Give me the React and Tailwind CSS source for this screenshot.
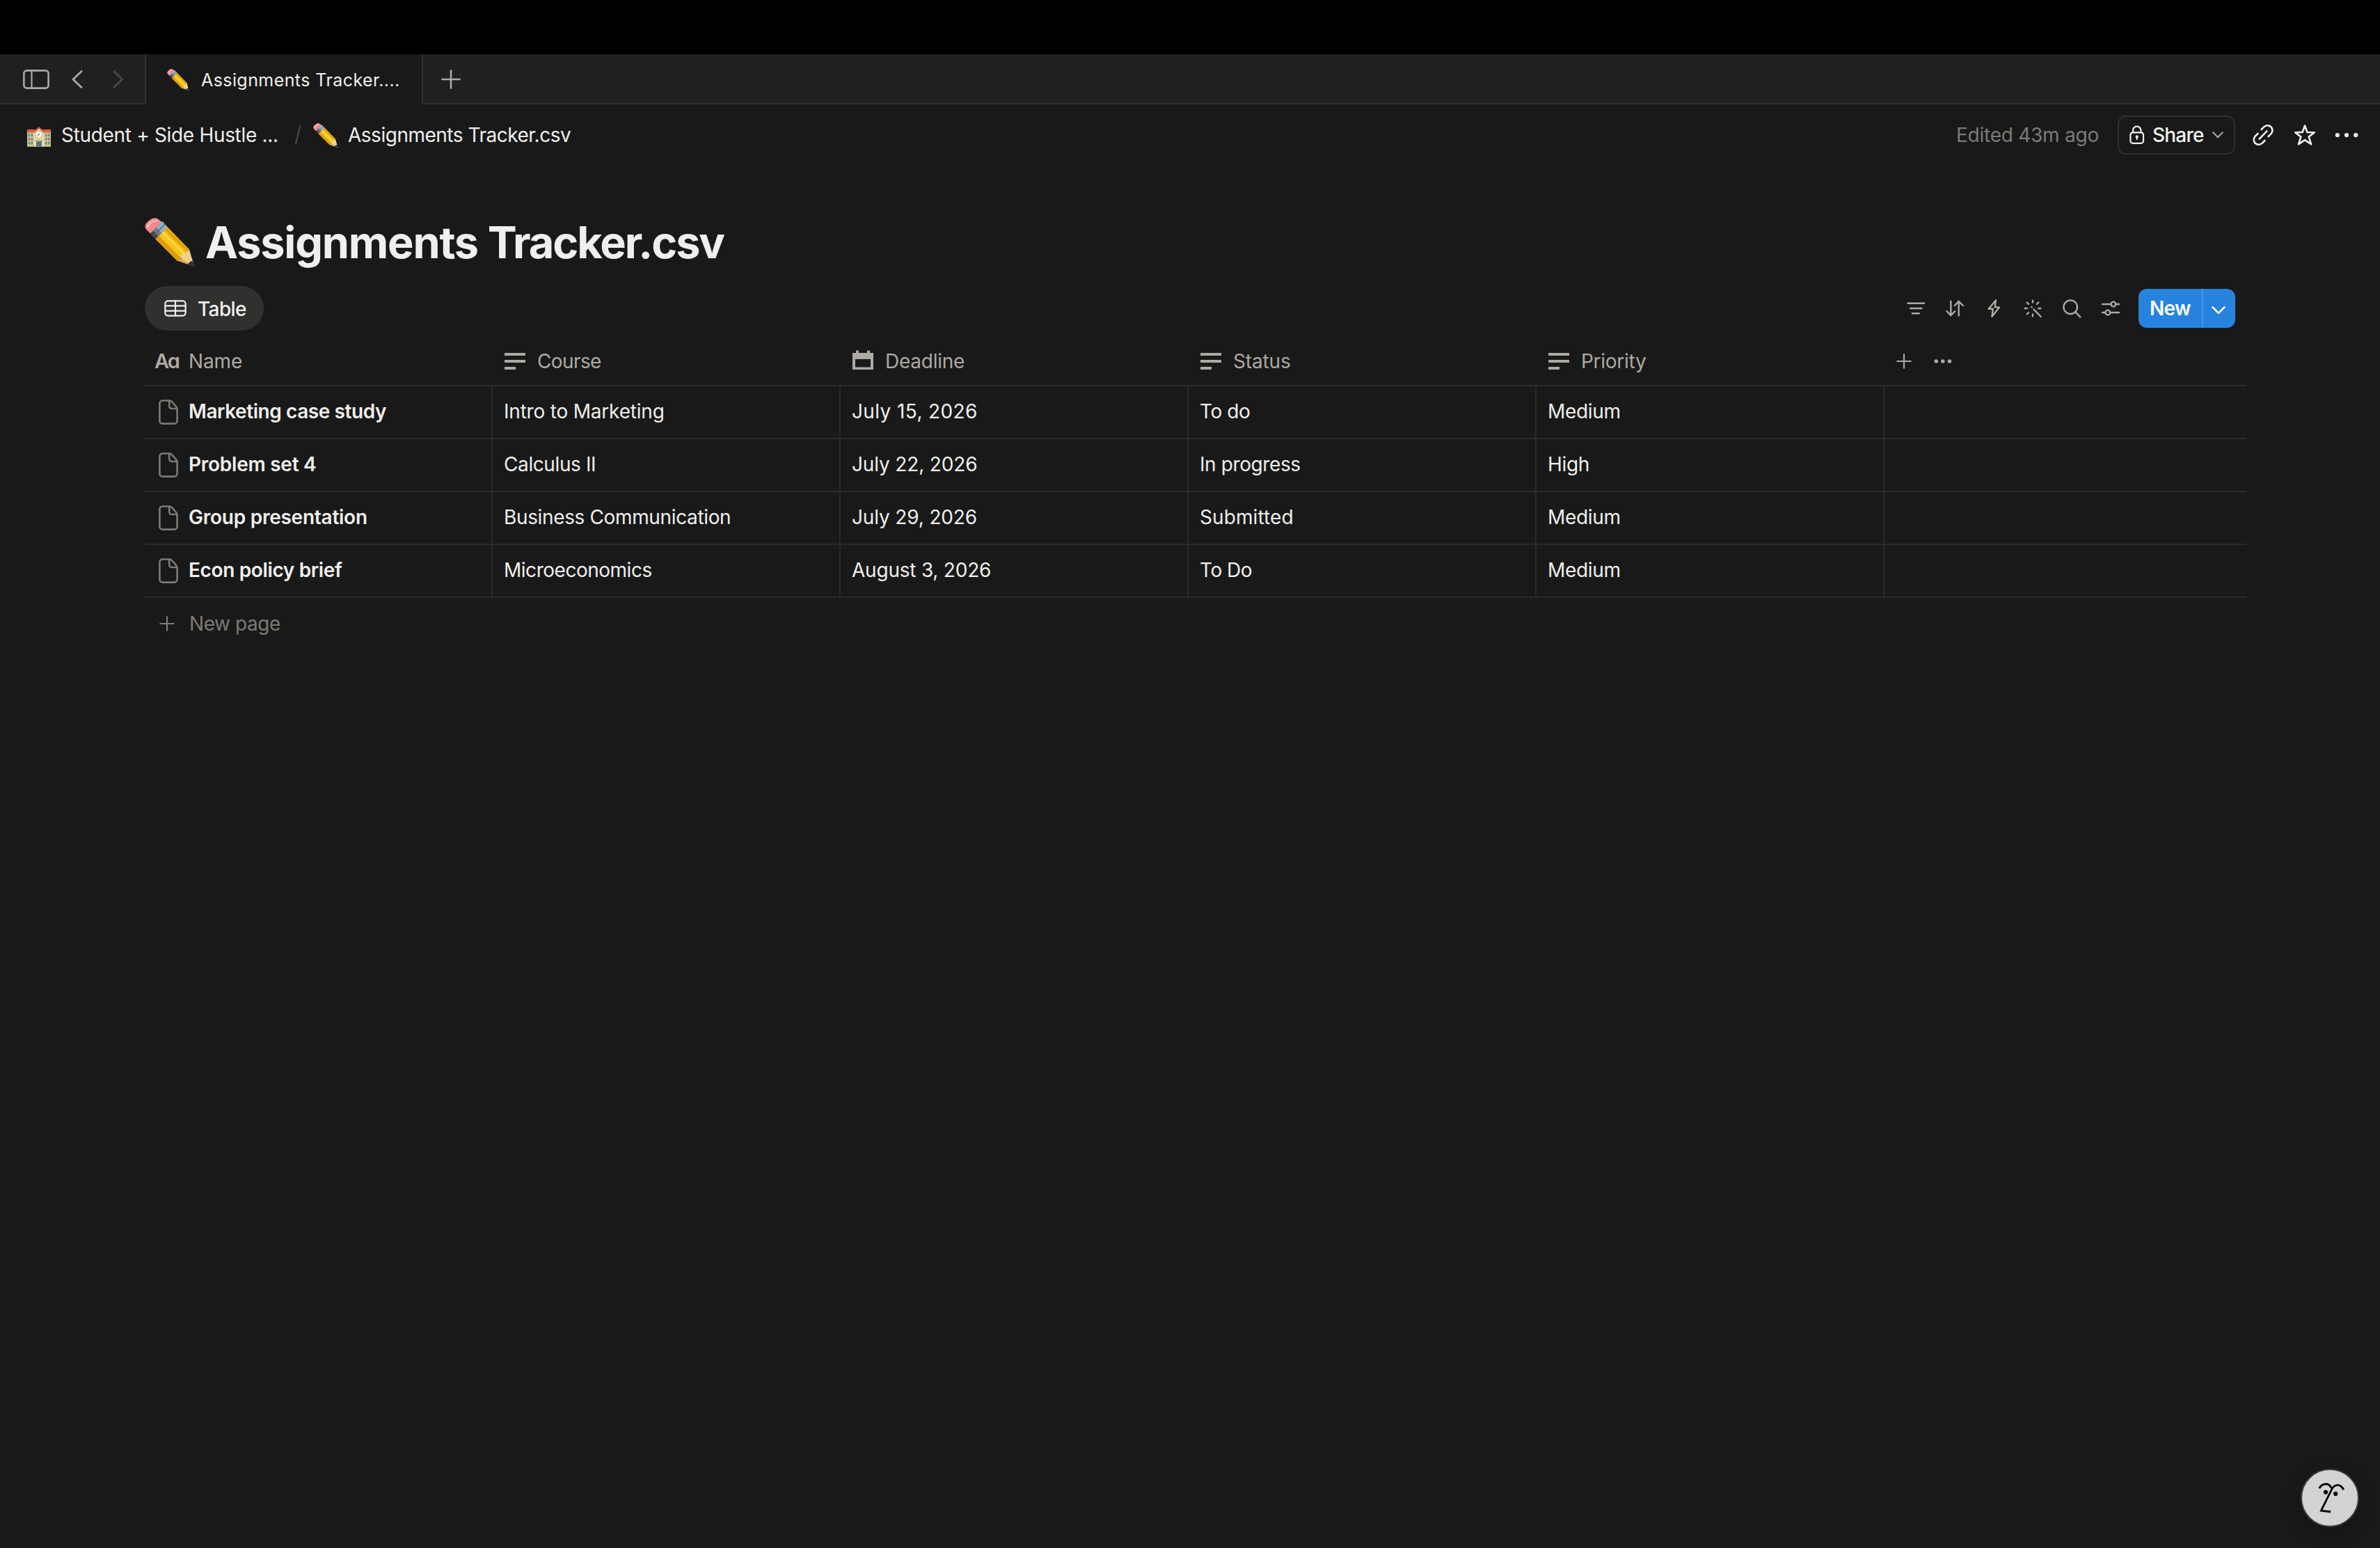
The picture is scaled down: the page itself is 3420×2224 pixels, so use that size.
import React from 'react';

const Icon = ({ w, h, className, width = 2.4, children }) => (
    <svg
        width={w}
        height={h}
        viewBox={`0 0 ${w} ${h}`}
        fill="none"
        stroke="currentColor"
        strokeWidth={width}
        strokeLinecap="round"
        strokeLinejoin="round"
        className={`shrink-0 ${className || ''}`}
    >
        {children}
    </svg>
);

const Pencil = ({ className }) => (
    <svg viewBox="0 0 72 70" className={`shrink-0 ${className}`}>
        <path d="M8.5 23 L2 16.5 C-1 12 1 8 5 5 C9 1 14 -1.5 19 1.5 L26 7 Z" fill="#f08a8d" />
        <path d="M4 13 C6 8 11 4 17 4" stroke="#f9b4b3" strokeWidth="3" fill="none" strokeLinecap="round" />
        <path d="M8 22.5 L25.5 5.3 L32.5 13 L15.5 30.5 Z" fill="#6f7d8c" />
        <path d="M17 13.8 L25.5 5.3 L32.5 13 L24 21.7 Z" fill="#8fb0d0" />
        <path d="M8 22.5 L12 18.5 L19.5 26.3 L15.5 30.5 Z" fill="#454649" />
        <path d="M11.5 26.5 L29 9" stroke="#59626c" strokeWidth="1.4" />
        <path d="M15.5 30.5 L32.5 13 L64 45.5 L47 62 Z" fill="#fcc41a" />
        <path d="M15.5 30.5 L20.3 25.5 L52 58 L47 62 Z" fill="#dd9c10" />
        <path d="M28 17.8 L32.5 13 L64 45.5 L60 49 Z" fill="#e2a60c" />
        <path d="M26 21 L57 52" stroke="#ffdc4e" strokeWidth="2.6" />
        <path d="M47 61.5 L52.5 58.5 L51.5 54 L60 49 L64 45.5 L71.2 69.8 Z" fill="#f3d08d" />
        <path d="M47 61.5 L52.5 58.5 L71.2 69.8 Z" fill="#d9ab62" />
        <path d="M66.8 62 C64.5 63 63 65 62 67.2 L71.4 70 L69.3 62.6 Z" fill="#2f3237" />
    </svg>
);

const School = () => (
    <svg width="36" height="29" viewBox="0 0 36 29" className="shrink-0">
        <path d="M1 7 H35 V29 H1 Z" fill="#cfc48f" />
        <path d="M1.5 4 H34.5 L36 8.6 H0 Z" fill="#dc6144" />
        <path d="M11 8 L18 2 L25 8 V29 H11 Z" fill="#ece3b4" />
        <path d="M9.5 7.8 L18 0 L26.5 7.8 L24.8 8.8 L18 3 L11.2 8.8 Z" fill="#d9573c" />
        <circle cx="18" cy="11.6" r="5.6" fill="#cfa954" />
        <circle cx="18" cy="11.6" r="4.5" fill="#fbfbf7" />
        <path d="M18.6 11 L15.6 12.8 M18.6 11 L18 9.6" stroke="#3a3a3a" strokeWidth="1" />
        {[2.8, 6.8, 27.2, 31.2].map((x) =>
            [10.4, 16, 21.8].map((y) => (
                <rect key={`${x}-${y}`} x={x} y={y} width="2.2" height="3.6" fill="#57809b" />
            ))
        )}
        <rect x="12.2" y="18.8" width="11.6" height="1.8" fill="#b7aa72" />
        <rect x="14" y="21" width="8" height="8" fill="#3c6b87" />
        <path d="M16.2 21 V29 M19.8 21 V29" stroke="#b7ac78" strokeWidth="0.7" />
        <rect x="1" y="28.2" width="34" height="0.8" fill="#9f955f" />
    </svg>
);

const TextIcon = () => (
    <svg width="30" height="24" viewBox="0 0 30 24" fill="currentColor" className="shrink-0">
        <rect width="30" height="4" />
        <rect y="10" width="30" height="4" />
        <rect y="20" width="16" height="4" />
    </svg>
);

const CalendarIcon = () => (
    <svg width="30" height="32" viewBox="0 0 30 32" fill="currentColor" className="shrink-0">
        <path fillRule="evenodd" d="M0 4 H5 V0.5 H9 V4 H21 V0.5 H25 V4 H30 V28 H0 Z M4 13 V24.5 H26 V13 Z" />
    </svg>
);

const PageIcon = () => (
    <Icon w={28} h={36} width={2.6} className="text-[#7d7a75]">
        <path d="M6 1.5 H15.5 C17 1.5 18 2 19 3.1 L25 10 C26 11.1 26.6 12.3 26.6 13.8 V30.5 A4.2 4.2 0 0 1 22.4 34.6 H5.6 A4.2 4.2 0 0 1 1.4 30.4 V5.8 A4.2 4.2 0 0 1 6 1.5 Z" />
        <path d="M15.2 2 V9.6 A3.4 3.4 0 0 0 18.6 13 H26" />
    </Icon>
);

const PlusIcon = () => (
    <Icon w={22} h={22} width={2.2}>
        <path d="M11 1.2 V20.8 M1.2 11 H20.8" />
    </Icon>
);

const columns = [
    { label: 'Course', icon: <TextIcon />, track: 'tracking-[-0.6px]' },
    { label: 'Deadline', icon: <CalendarIcon />, track: 'tracking-[-0.25px]' },
    { label: 'Status', icon: <TextIcon />, track: 'tracking-[-0.14px]' },
    { label: 'Priority', icon: <TextIcon />, track: 'tracking-[-0.27px]' },
];

const rows = [
    {
        name: 'Marketing case study',
        track: 'tracking-[-0.42px]',
        cells: [
            ['Intro to Marketing', 'tracking-[-0.2px]'],
            ['July 15, 2026', 'tracking-[0.38px]'],
            ['To do', 'tracking-[-0.4px]'],
            ['Medium', 'tracking-[-0.3px]'],
        ],
    },
    {
        name: 'Problem set 4',
        track: 'tracking-[-0.25px]',
        cells: [
            ['Calculus II', 'tracking-[-0.4px]'],
            ['July 22, 2026', 'tracking-[-0.15px]'],
            ['In progress', 'tracking-[-0.4px]'],
            ['High', 'tracking-[-0.3px]'],
        ],
    },
    {
        name: 'Group presentation',
        track: 'tracking-[-0.25px]',
        cells: [
            ['Business Communication', 'tracking-[-0.36px]'],
            ['July 29, 2026', 'tracking-[-0.15px]'],
            ['Submitted', 'tracking-[0.1px]'],
            ['Medium', 'tracking-[-0.3px]'],
        ],
    },
    {
        name: 'Econ policy brief',
        track: 'tracking-[-0.36px]',
        cells: [
            ['Microeconomics', 'tracking-[-0.48px]'],
            ['August 3, 2026', 'tracking-[-0.22px]'],
            ['To Do', 'tracking-[-0.5px]'],
            ['Medium', 'tracking-[-0.3px]'],
        ],
    },
];

const TabBar = () => (
    <div className="flex h-[72px] text-[#ada9a3]">
        <div className="w-[210px] flex items-center pl-[33px] pt-[2px] bg-[#202020] border-r-2 border-b-2 border-[#2f2f2e]">
            <Icon w={38} h={28} width={2.6}>
                <rect x="1.4" y="1.4" width="35.2" height="25.2" rx="4" />
                <path d="M12.5 1.4 V26.6" strokeWidth="2.2" />
            </Icon>
            <Icon w={16} h={28} width={2.8} className="ml-8">
                <path d="M14 2.4 L2 14 L14 25.6" />
            </Icon>
            <Icon w={16} h={28} width={2.8} className="ml-[43px] text-[#4a4947]">
                <path d="M2 2.4 L13.5 14 L2 25.6" />
            </Icon>
        </div>
        <div className="w-[396px] flex items-center pl-[30px]">
            <Pencil className="w-8 h-[31px]" />
            <span className="ml-[17px] mt-[2px] text-[25px] leading-[30px] tracking-[0.42px] text-[#f0efed]">Assignments Tracker....</span>
        </div>
        <div className="flex-1 flex items-center pl-[26px] pt-[2px] bg-[#202020] border-l-2 border-b-2 border-[#2f2f2e]">
            <Icon w={28} h={28} width={2.6}>
                <path d="M14 1.4 V26.6 M1.4 14 H26.6" />
            </Icon>
        </div>
    </div>
);

const TopBar = () => (
    <div className="flex items-center h-[88px] pl-[38px] pr-[31px] text-[28px] leading-[34px] text-[#f0efed]">
        <div className="mt-[5px]"><School /></div>
        <span className="ml-[14px] w-[336px] tracking-[-0.32px]">Student + Side Hustle ...</span>
        <Icon w={8} h={28} width={2} className="text-[#4f4e4c]">
            <path d="M7 1.2 L1 26.8" />
        </Icon>
        <Pencil className="w-9 h-[35px] ml-[18px]" />
        <span className="ml-[14px] tracking-[-0.49px]">Assignments Tracker.csv</span>

        <span className="ml-auto w-[232px] text-[#7d7a75] tracking-[-0.25px]">Edited 43m ago</span>
        <button className="flex items-center w-[169px] h-14 pl-[15px] rounded-[12px] border-2 border-[#30302e]">
            <Icon w={22} h={28} width={2.2}>
                <rect x="1.4" y="10.4" width="18.6" height="15.4" rx="3.4" />
                <path d="M5 10 V7.4 A5.7 5.7 0 0 1 16.4 7.4 V10" />
                <circle cx="10.7" cy="16.4" r="1" />
                <path d="M10.7 17 V20" />
            </Icon>
            <span className="ml-[11px] w-[86px] text-left font-medium tracking-[-0.78px]">Share</span>
            <Icon w={16} h={10} width={2} className="text-[#ada9a3]">
                <path d="M1.2 1.2 L8 8.2 L14.8 1.2" />
            </Icon>
        </button>
        <Icon w={32} h={32} width={2.6} className="ml-6">
            <path d="M13.6 8 L17.2 4.4 A7 7 0 0 1 27.4 14.4 L23.6 18" />
            <path d="M8.4 14 L4.7 17.7 A7 7 0 0 0 14.8 27.7 L18.4 24" />
            <path d="M21.4 10.4 L10.6 21.6" />
        </Icon>
        <Icon w={32} h={32} width={2.6} className="ml-7">
            <path d="M16 2.5 L19.4 12 L29.8 12.2 L21.7 18.6 L25 29.2 L16 23.1 L7 29.2 L10.3 18.6 L2.2 12.2 L12.6 12 Z" />
        </Icon>
        <svg width="34" height="8" viewBox="0 0 34 8" fill="currentColor" className="shrink-0 ml-[27px]">
            <circle cx="3.8" cy="4" r="3.1" />
            <circle cx="17" cy="4" r="3.1" />
            <circle cx="30.2" cy="4" r="3.1" />
        </svg>
    </div>
);

const Toolbar = () => (
    <div className="flex items-center gap-7 text-[#ada9a3]">
        <Icon w={28} h={28}>
            <path d="M2.4 6.7 H26 M6 14 H22.4 M8.8 21.3 H18.8" />
        </Icon>
        <Icon w={28} h={28}>
            <path d="M8.3 3.6 V24.2 M2.4 18 L8.3 24.2 L14.2 18" />
            <path d="M19.7 24.4 V3.8 M13.8 10 L19.7 3.8 L25.8 10" />
        </Icon>
        <Icon w={28} h={28}>
            <path d="M17 2.2 L6.6 14.8 H12.8 L11.4 25.8 L22 12.4 H15.6 Z" />
        </Icon>
        <Icon w={28} h={28}>
            <path d="M14 2.8 V5.6 M14 22.4 V25.4 M2.6 14 H5.8 M22.2 14 H25.4 M5.8 5.6 L8 7.8 M20 7.8 L22.2 5.6 M8 20 L5.8 22.2" />
            <path d="M12.4 12.2 L12.8 12.6 M15.6 15.6 L25.8 26" />
        </Icon>
        <Icon w={28} h={28}>
            <circle cx="12.2" cy="12.2" r="9.8" />
            <path d="M19.4 19.4 L26.2 26.4" />
        </Icon>
        <Icon w={28} h={28}>
            <path d="M2 8 H14 M21.6 8 H26 M2 20 H6 M13.6 20 H26" />
            <circle cx="17.8" cy="8" r="3.4" />
            <circle cx="9.8" cy="20" r="3.4" />
        </Icon>
        <div className="-ml-[2px] flex h-14 rounded-[12px] overflow-hidden bg-[#2783de] text-white">
            <button className="w-[93px] pl-4 text-left border-r-2 border-[#4a95e2] text-[28px] leading-[34px] font-semibold tracking-[-0.7px]">New</button>
            <button className="w-[46px] flex items-center pl-3">
                <Icon w={20} h={12} width={2.6} className="mt-[5px]">
                    <path d="M1.6 1.4 L10 9.9 L18.4 1.4" />
                </Icon>
            </button>
        </div>
    </div>
);

const Table = () => (
    <div className="ml-[208px] mr-[192px] text-[28px] leading-[34px]">
        <div className="flex h-20 pt-[10px] border-b-2 border-[#2a2a29] text-[#ada9a3]">
            <div className="w-[500px] flex items-center pl-[14px]">
                <span className="w-[49px] text-[29px] font-semibold tracking-[-2px] [font-feature-settings:'cv11']">Aa</span>
                <span className="tracking-[-0.12px]">Name</span>
            </div>
            {columns.map((col) => (
                <div key={col.label} className="w-[500px] flex items-center pl-[17px]">
                    {col.icon}
                    <span className={`ml-[17px] ${col.track}`}>{col.label}</span>
                </div>
            ))}
            <div className="flex items-center pl-[17px]">
                <PlusIcon />
                <svg width="28" height="8" viewBox="0 0 28 8" fill="currentColor" className="ml-[31px]">
                    <circle cx="4.3" cy="4" r="2.8" />
                    <circle cx="13.8" cy="4" r="2.8" />
                    <circle cx="23.4" cy="4" r="2.8" />
                </svg>
            </div>
        </div>
        {rows.map((row) => (
            <div key={row.name} className="flex h-[76px] border-b-2 border-[#2a2a29] text-[#f0efed]">
                <div className="w-[500px] flex items-center pl-5 border-r-2 border-[#2a2a29]">
                    <PageIcon />
                    <span className={`ml-[15px] mb-[2px] font-semibold ${row.track}`}>{row.name}</span>
                </div>
                {row.cells.map(([text, track], i) => (
                    <div key={i} className="w-[500px] flex items-center pl-4 pb-[2px] border-r-2 border-[#2a2a29]">
                        <span className={track}>{text}</span>
                    </div>
                ))}
            </div>
        ))}
        <div className="flex items-center h-[74px] pl-[21px] text-[#7d7a75]">
            <PlusIcon />
            <span className="ml-[21px] tracking-[-0.43px]">New page</span>
        </div>
    </div>
);

const App = () => {
    return (
        <div className="relative w-[3420px] h-[2224px] bg-[#191919] overflow-hidden font-['Inter','Liberation_Sans',sans-serif] whitespace-nowrap">
            <div className="h-[78px] bg-black" />
            <TabBar />
            <TopBar />

            <div className="flex items-center h-20 mt-[70px] pl-[208px]">
                <Pencil className="w-[72px] h-[70px]" />
                <h1 className="ml-[15px] text-[63px] leading-[80px] font-bold tracking-[-1.2px] text-[#f0efed]">
                    Assignments <span className="tracking-[-2.1px]">Tracker.csv</span>
                </h1>
            </div>

            <div className="flex items-center justify-between h-16 mt-[23px] px-[208px]">
                <button className="flex items-center w-[171px] h-16 pl-7 rounded-full bg-[#30302e] text-[#f0efed]">
                    <Icon w={32} h={24} width={2.2}>
                        <rect x="1.4" y="1.4" width="29.2" height="21.2" rx="4" />
                        <path d="M1.4 8.4 H30.6 M1.4 15.6 H30.6 M16 1.4 V22.6" />
                    </Icon>
                    <span className="ml-4 mt-[1px] text-[28px] leading-[34px] font-medium tracking-[-0.62px]">Table</span>
                </button>
                <Toolbar />
            </div>

            <Table />

            <div className="absolute right-[30px] bottom-[30px] w-[84px] h-[84px] rounded-full bg-[#d3d3d3] border-2 border-[#3c3c3b] text-black shadow-[0_8px_24px_rgba(0,0,0,0.2)]">
                <svg viewBox="2 2 80 80" fill="none" stroke="currentColor" strokeWidth="2.8">
                    <path d="M26.7 28.2 C31 20.5 40.5 19.5 44.3 28" />
                    <path d="M43.2 62 L29.4 60.4 L44 31 C48 22 57 20.5 61.8 30.4" />
                    <circle cx="36" cy="33.8" r="3.1" fill="currentColor" stroke="none" />
                    <circle cx="50.2" cy="36.1" r="3.1" fill="currentColor" stroke="none" />
                </svg>
            </div>
        </div>
    );
};

export default App;
